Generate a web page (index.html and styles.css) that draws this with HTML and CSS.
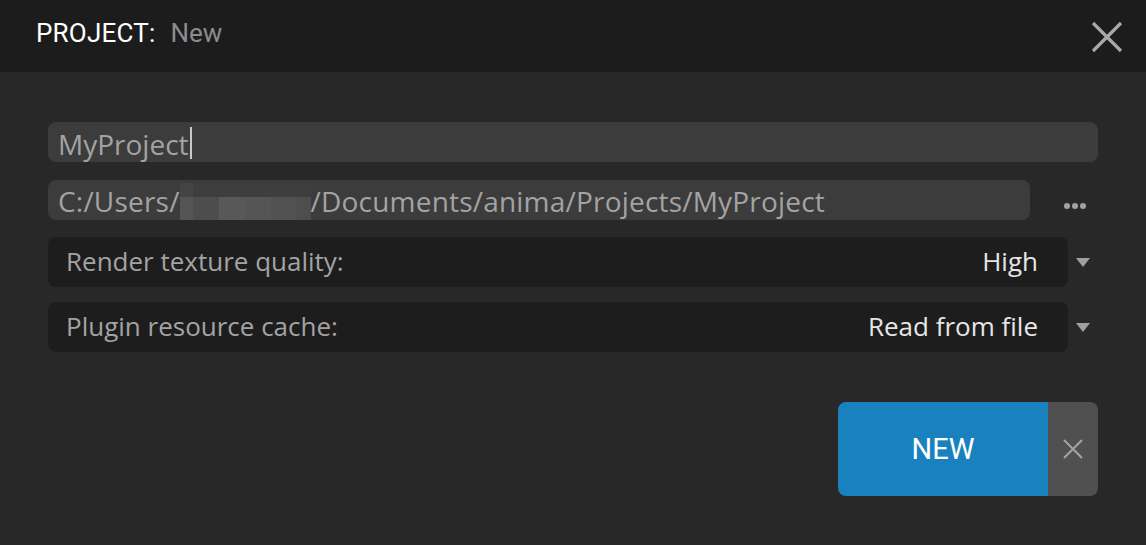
FILE: index.html
```html
<!DOCTYPE html>
<html>
<head>
<meta charset="utf-8">
<link rel="stylesheet" href="styles.css">
</head>
<body>
<div class="dialog">
  <div class="header">
    <div class="title"><span class="t-label">PROJECT:</span><span class="t-name">New</span></div>
    <svg class="close" width="34" height="34" viewBox="0 0 34 34"><path d="M3 3L31 31M31 3L3 31" stroke="#a9a9a9" stroke-width="3.2" fill="none"/></svg>
  </div>
  <div class="body">
    <div class="row r1">
      <div class="input full"><span class="val">MyProject</span><span class="cursor"></span></div>
    </div>
    <div class="row r2">
      <div class="input path"><span class="val">C:/Users/</span><span class="blur"><span class="b b1"></span><span class="b b2"></span><span class="b b3"></span><span class="b b4"></span><span class="b b5"></span><span class="b b6"></span></span><span class="val">/Documents/anima/Projects/MyProject</span></div>
      <div class="more"><span class="dot"></span><span class="dot"></span><span class="dot"></span></div>
    </div>
    <div class="row r3">
      <div class="select"><span class="lbl">Render texture quality:</span><span class="sv">High</span></div>
      <div class="arrow"></div>
    </div>
    <div class="row r4">
      <div class="select"><span class="lbl">Plugin resource cache:</span><span class="sv">Read from file</span></div>
      <div class="arrow"></div>
    </div>
    <div class="actions">
      <div class="btn">
        <div class="btn-main">NEW</div>
        <div class="btn-x"><svg width="20" height="20" viewBox="0 0 20 20"><path d="M1 1L19 19M19 1L1 19" stroke="#a3a3a3" stroke-width="2" fill="none"/></svg></div>
      </div>
    </div>
  </div>
</div>
</body>
</html>
```
FILE: styles.css
```css
* { box-sizing: border-box; }
html, body { margin: 0; padding: 0; }
body { width: 1146px; height: 545px; background: #282828; font-family: "Open Sans", "Noto Sans", sans-serif; overflow: hidden; }
.dialog { display: flex; flex-direction: column; height: 545px; }
.header { height: 72px; flex: none; background: #1c1c1c; display: flex; align-items: center; justify-content: space-between; padding: 0 22px 0 36px; }
.title { font-family: Roboto, "Liberation Sans", sans-serif; font-size: 26px; display: flex; gap: 15px; margin-top: -7px; }
.t-label { color: #ffffff; letter-spacing: 0.2px; }
.t-name { color: #8c8c8c; }
.close { margin-top: 2px; }
.body { padding: 50px 48px 0 48px; display: flex; flex-direction: column; }
.row { display: flex; align-items: center; }
.r2 { margin-top: 18px; height: 40px; }
.r3 { margin-top: 17px; }
.r4 { margin-top: 15px; }
.input { height: 40px; background: #3c3c3c; border-radius: 8px; display: flex; align-items: center; padding-left: 10px; color: #a3a3a3; font-size: 28px; white-space: nowrap; overflow: hidden; }
.full { width: 1050px; }
.path { width: 982px; }
.path .val { margin-top: 1px; letter-spacing: 0.2px; }
.cursor { width: 2px; height: 32px; background: #c8c8c8; margin-left: 1px; margin-top: 2px; }
.val { line-height: 40px; margin-top: 3px; }
.blur { display: flex; flex: none; width: 131px; height: 37px; margin-top: 3px; background: #3e3e3e; }
.b { display: block; height: 23px; margin-top: 14px; }
.b1 { width: 13px; height: 37px; margin-top: 0; background: linear-gradient(#444444 0 14px, #555555 14px); }
.b2 { width: 26px; background: #4d4d4d; }
.b3 { width: 26px; background: #585858; }
.b4 { width: 26px; background: #555555; }
.b5 { width: 25px; background: #525252; }
.b6 { width: 15px; background: #4e4e4e; }
.more { display: flex; gap: 2px; margin-left: 34px; margin-top: 12px; }
.dot { width: 6px; height: 6px; border-radius: 50%; background: #a3a3a3; }
.select { width: 1020px; height: 50px; background: #1d1d1d; border-radius: 8px; display: flex; align-items: center; justify-content: space-between; padding: 0 30px 3px 18px; font-size: 26px; }
.lbl { color: #a3a3a3; }
.sv { color: #e6e6e6; }
.arrow { width: 0; height: 0; border-left: 7.5px solid transparent; border-right: 7.5px solid transparent; border-top: 9px solid #a0a0a0; margin-left: 8px; }
.actions { display: flex; justify-content: flex-end; margin-top: 50px; }
.btn { display: flex; width: 260px; height: 94px; border-radius: 8px; overflow: hidden; }
.btn-main { width: 210px; background: #1982be; color: #ffffff; font-family: Roboto, "Liberation Sans", sans-serif; font-size: 29px; display: flex; align-items: center; justify-content: center; }
.btn-x { width: 50px; background: #505050; display: flex; align-items: center; justify-content: center; }
```
